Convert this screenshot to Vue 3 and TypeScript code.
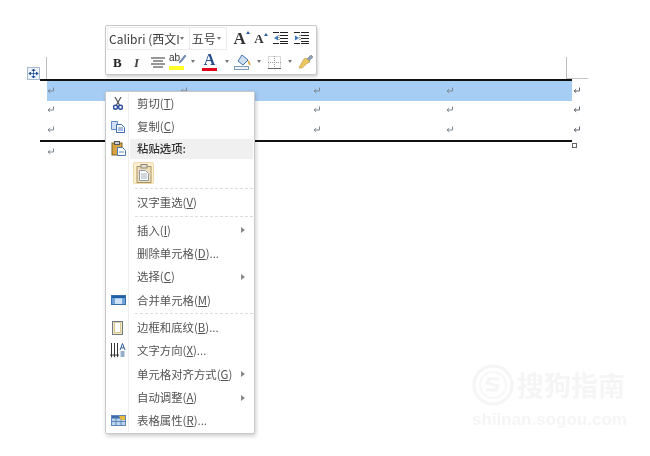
<script setup lang="ts">
interface MenuItem {
  before: string
  key: string
  after?: string
  icon?: string
  arrow?: boolean
  sep?: boolean
}

const rows = [0, 1, 2]
const cols = [0, 1, 2, 3]

const topItems: MenuItem[] = [
  { before: '剪切', key: 'T', icon: 'cut' },
  { before: '复制', key: 'C', icon: 'copy' },
]

const items: MenuItem[] = [
  { before: '汉字重选', key: 'V', sep: true },
  { before: '插入', key: 'I', arrow: true },
  { before: '删除单元格', key: 'D', after: '...' },
  { before: '选择', key: 'C', arrow: true },
  { before: '合并单元格', key: 'M', icon: 'merge', sep: true },
  { before: '边框和底纹', key: 'B', after: '...', icon: 'border' },
  { before: '文字方向', key: 'X', after: '...', icon: 'dir' },
  { before: '单元格对齐方式', key: 'G', arrow: true },
  { before: '自动调整', key: 'A', arrow: true },
  { before: '表格属性', key: 'R', after: '...', icon: 'props' },
]
</script>

<template>
  <div class="page">
    <div class="margin-marks">
      <div class="move-handle">
        <svg width="13" height="13" viewBox="0 0 13 13">
          <rect x="0.5" y="0.5" width="12" height="12" fill="#eef3fa" stroke="#a9b8cc" />
          <path d="M6.5 2v9M2 6.5h9M6.5 2L5 3.5h3zM6.5 11L5 9.5h3zM2 6.5L3.5 5v3zM11 6.5L9.5 5v3z" fill="#1f4f96" stroke="#1f4f96" stroke-width="0.8" />
        </svg>
      </div>
      <div class="crop crop-left"></div>
      <div class="crop crop-right"></div>
    </div>

    <div class="table">
      <div v-for="r in rows" :key="r" class="row">
        <div class="cells" :class="{ selected: r === 0 }">
          <div v-for="c in cols" :key="c" class="cell">
            <svg class="ret" width="8" height="8" viewBox="0 0 8 8">
              <path d="M6.5 0.5v3.5H1.5M3.2 2.2L1 4l2.2 1.8" fill="none" stroke="#7d8790" stroke-width="1" />
            </svg>
          </div>
        </div>
        <svg class="ret end" width="8" height="8" viewBox="0 0 8 8">
          <path d="M6.5 0.5v3.5H1.5M3.2 2.2L1 4l2.2 1.8" fill="none" stroke="#5f6770" stroke-width="1" />
        </svg>
      </div>
      <div class="end-square"></div>
    </div>

    <div class="after-table">
      <svg class="ret" width="8" height="8" viewBox="0 0 8 8">
        <path d="M6.5 0.5v3.5H1.5M3.2 2.2L1 4l2.2 1.8" fill="none" stroke="#7d8790" stroke-width="1" />
      </svg>
    </div>

    <div class="toolbar">
      <div class="tool-row">
        <div class="combo combo-font"><span class="combo-text">Calibri (西文I</span><i class="drop"></i></div>
        <div class="combo combo-size"><span class="combo-text">五号</span><i class="drop"></i></div>
        <span class="grow">A<i class="tri"></i></span>
        <span class="shrink">A<i class="tri"></i></span>
        <svg class="tool-icon indent" width="15" height="14" viewBox="0 0 15 14">
          <path d="M0 1.500h6M7 1.500h8M7 4.500h8M7 7.500h8M7 10.500h8M0 12.500h6M7 12.500h8" stroke="#222" />
          <path d="M6 4v6" stroke="#555" stroke-dasharray="1 1" />
          <path d="M5 4.500v5L1 7z" fill="#3f76c0" />
        </svg>
        <svg class="tool-icon indent" width="15" height="14" viewBox="0 0 15 14">
          <path d="M0 1.500h6M7 1.500h8M7 4.500h8M7 7.500h8M7 10.500h8M0 12.500h6M7 12.500h8" stroke="#222" />
          <path d="M6 4v6" stroke="#555" stroke-dasharray="1 1" />
          <path d="M1 4.500v5L5 7z" fill="#3f76c0" />
        </svg>
      </div>
      <div class="tool-row second">
        <b class="btn btn-b">B</b>
        <em class="btn btn-i">I</em>
        <svg class="btn btn-center" width="14" height="11" viewBox="0 0 14 11">
          <path d="M0 1h14M2 4h10M0 7h14M2 10h10" stroke="#333" stroke-width="1.200" />
        </svg>
        <div class="btn highlight">
          <span class="hl-text">ab</span>
          <svg class="hl-pen" width="8" height="10" viewBox="0 0 8 10">
            <path d="M7 1L2 7 1 9l2-1 5-6z" fill="#6d8fbd" stroke="#4a6a96" stroke-width="0.600" />
          </svg>
          <i class="hl-bar"></i>
        </div>
        <i class="btn drop d-hl"></i>
        <div class="btn font-color">
          <span class="fc-text">A</span>
          <i class="fc-bar"></i>
        </div>
        <i class="btn drop d-fc"></i>
        <svg class="btn fill-icon" width="17" height="17" viewBox="0 0 17 17">
          <path d="M4 8l4-6 6 5-5 5z" fill="#cfe0f3" stroke="#3f6ea8" />
          <path d="M14 8c1 1.500 2 3 1.500 4" stroke="#d9a53c" stroke-width="1.800" fill="none" />
          <rect x="0.500" y="13.500" width="14" height="3" fill="#f4f4f4" stroke="#7e9bb5" />
        </svg>
        <i class="btn drop d-fill"></i>
        <svg class="btn grid-icon" width="13" height="13" viewBox="0 0 13 13">
          <rect x="0.500" y="0.500" width="12" height="12" fill="none" stroke="#b5b5b5" stroke-dasharray="1 1" />
          <path d="M6.500 0v13M0 6.500h13" stroke="#999" stroke-dasharray="1 1" />
          <path d="M0 12.500h13" stroke="#666" />
        </svg>
        <i class="btn drop d-grid"></i>
        <svg class="btn brush" width="16" height="15" viewBox="0 0 16 15">
          <path d="M9 5l4-4 2 2-4 4z" fill="#8fa0b5" stroke="#6d7b8c" stroke-width="0.600" />
          <path d="M8 4l4 4-3 1.500L4 14H1l2-4 2.500-4.500z" fill="#ecc75f" stroke="#b8963f" stroke-width="0.600" />
        </svg>
      </div>
    </div>

    <div class="menu">
      <div v-for="item in topItems" :key="item.before" class="item">
        <div class="gutter">
          <svg v-if="item.icon === 'cut'" width="10" height="13" viewBox="0 0 10 13">
            <path d="M2 0l4.500 8M8 0L3.500 8" stroke="#555" stroke-width="1.200" />
            <circle cx="2.500" cy="10.300" r="2" fill="none" stroke="#2d4f9e" stroke-width="1.500" />
            <circle cx="7.500" cy="10.300" r="2" fill="none" stroke="#2d4f9e" stroke-width="1.500" />
          </svg>
          <svg v-else width="14" height="12" viewBox="0 0 14 12">
            <path d="M0.500 0.500h6v8h-6z" fill="#cfe0f4" stroke="#5f8ac4" />
            <path d="M5.500 3.500h5l3 3v5h-8z" fill="#fff" stroke="#3f6fb4" />
            <path d="M7 7h5M7 9h5" stroke="#4f7fbe" />
          </svg>
        </div>
        <span class="label">{{ item.before }}(<u>{{ item.key }}</u>)</span>
      </div>

      <div class="item heading">
        <div class="gutter">
          <svg width="15" height="15" viewBox="0 0 15 15">
            <rect x="1" y="2" width="10" height="12" fill="#d9a441" stroke="#7d6322" />
            <rect x="3.500" y="0.500" width="5" height="3" fill="#c9ccd1" stroke="#555" />
            <path d="M6.500 6.500h5l3 3v5h-8z" fill="#fff" stroke="#4c78b4" />
            <path d="M8 11h5" stroke="#5c86be" />
          </svg>
        </div>
        <span class="label">粘贴选项:</span>
      </div>

      <div class="paste-row">
        <div class="paste-btn">
          <svg width="16" height="19" viewBox="0 0 16 19">
            <rect x="1" y="2.500" width="14" height="16" fill="#f0dfbb" stroke="#a89468" />
            <rect x="5" y="0.500" width="6" height="3.500" fill="#e4e0d6" stroke="#8e8672" />
            <path d="M3.500 6.500h6l3 3v7h-9z" fill="#fff" stroke="#8d98a6" />
            <path d="M5 10h6M5 12h6M5 14h6" stroke="#a3adb8" />
          </svg>
        </div>
      </div>
      <div class="sep"></div>

      <template v-for="item in items" :key="item.before">
        <div class="item">
          <div class="gutter">
            <svg v-if="item.icon === 'merge'" width="15" height="10" viewBox="0 0 15 10">
              <rect x="0.500" y="0.500" width="14" height="9" fill="#6fa3d8" stroke="#3a6ea8" />
              <rect x="1" y="1" width="13" height="2" fill="#1f5fa8" />
              <rect x="4" y="3.500" width="7" height="5.500" fill="#cfe3f6" />
            </svg>
            <svg v-else-if="item.icon === 'border'" width="12" height="14" viewBox="0 0 12 14">
              <rect x="0.500" y="0.500" width="10" height="13" fill="#f3e6bd" stroke="#6f7a86" />
              <rect x="2.500" y="1.500" width="6" height="10" fill="#fff" stroke="#d8c893" />
            </svg>
            <svg v-else-if="item.icon === 'dir'" width="16" height="15" viewBox="0 0 16 15">
              <path d="M1.500 0v14M4.500 0v14M7.500 0v14" stroke="#333" />
              <path d="M0 11.500l1.500 3 1.500-3zM3 11.500l1.500 3 1.500-3zM6 11.500l1.500 3 1.500-3z" fill="#333" />
              <path d="M10 7l2.500-6.500L15 7M11 4.800h3M10.500 9h4M10.500 11h4M10.500 13h4" stroke="#2f5f9e" fill="none" />
            </svg>
            <svg v-else-if="item.icon === 'props'" width="15" height="11" viewBox="0 0 15 11">
              <rect x="0.500" y="0.500" width="14" height="10" fill="#bcd4ee" stroke="#5d88b8" />
              <rect x="1" y="1" width="13" height="2.500" fill="#3a6ea8" />
              <path d="M5 3v7M10 3v7M1 6.500h13" stroke="#5d88b8" />
              <path d="M8 1h6v4H10z" fill="#e8b93f" />
            </svg>
          </div>
          <span class="label">{{ item.before }}(<u>{{ item.key }}</u>){{ item.after }}</span>
          <i v-if="item.arrow" class="arrow"></i>
        </div>
        <div v-if="item.sep" class="sep"></div>
      </template>
    </div>

    <div class="watermark">
      <div class="wm-top">
        <svg width="42" height="42" viewBox="0 0 42 42">
          <circle cx="21" cy="21" r="19" fill="none" stroke="#f5f5f5" stroke-width="3" />
          <circle cx="21" cy="21" r="13" fill="none" stroke="#f7f7f7" stroke-width="2" />
          <path d="M27 15H17l-2 4 11 3-2 4H14" fill="none" stroke="#f5f5f5" stroke-width="3" />
        </svg>
        <span class="wm-cn">搜狗指南</span>
      </div>
      <div class="wm-url">shiinan.sogou.com</div>
    </div>
  </div>
</template>

<style scoped>
.page {
  position: relative;
  width: 650px;
  height: 456px;
  overflow: hidden;
  background: #fff;
  font-family: "Noto Sans CJK SC", "Liberation Sans", sans-serif;
  color: #525252;
  filter: blur(0.35px);
}

.margin-marks {
  display: flex;
  height: 79px;
  padding-top: 57px;
  box-sizing: border-box;
  align-items: flex-end;
}

.move-handle {
  width: 13px;
  height: 13px;
  margin-left: 27px;
  margin-bottom: -1px;
}

.move-handle svg {
  display: block;
}

.crop {
  height: 22px;
  border-right: 1px solid #bdbdbd;
}

.crop-left {
  width: 6px;
}

.crop-right {
  position: relative;
  width: 519px;
}

.crop-right::after {
  content: "";
  position: absolute;
  left: 100%;
  bottom: 0;
  width: 22px;
  height: 1px;
  background: #c4c4c4;
}

.table {
  position: relative;
  width: 532px;
  margin-left: 40px;
  border-top: 2px solid #111;
  border-bottom: 2px solid #111;
}

.row {
  display: flex;
  width: 545px;
  height: 19.500px;
  margin-left: 7px;
  align-items: center;
}

.cells {
  display: grid;
  grid-template-columns: 133px 133px 133px 126px;
  width: 525px;
  height: 100%;
  align-items: center;
}

.cells.selected {
  background: #a6cdf4;
}

.cell {
  display: flex;
}

.ret {
  display: block;
}

.end {
  margin-left: 1px;
}

.end-square {
  position: absolute;
  right: -5px;
  bottom: -8px;
  width: 5px;
  height: 5px;
  box-sizing: border-box;
  border: 1px solid #666;
  background: #fff;
}

.after-table {
  margin: 6px 0 0 47px;
}

.toolbar {
  position: absolute;
  left: 105px;
  top: 25px;
  width: 212px;
  height: 50px;
  box-sizing: border-box;
  padding: 0 1px;
  background: #fff;
  border: 1px solid #c8c8c8;
  border-radius: 2px;
  box-shadow: 1px 2px 3px rgba(0, 0, 0, 0.18);
}

.tool-row {
  display: flex;
  align-items: center;
  height: 24px;
}

.tool-row.second {
  position: relative;
}

.combo {
  display: flex;
  align-items: center;
  height: 23px;
  box-sizing: border-box;
  border: 1px solid #ececec;
  font-size: 12px;
  color: #3c3c3c;
}

.combo-font {
  width: 86px;
  padding-left: 1px;
}

.combo-size {
  width: 39px;
  padding-left: 2px;
  border-left: none;
}

.combo-text {
  flex: 1;
  white-space: nowrap;
  overflow: hidden;
}

.drop {
  display: block;
  width: 0;
  height: 0;
  margin-right: 5px;
  border-left: 2.500px solid transparent;
  border-right: 2.500px solid transparent;
  border-top: 3px solid #777;
}

.grow,
.shrink {
  position: relative;
  font-family: "Liberation Serif", serif;
  font-weight: 700;
  color: #333;
  line-height: 1;
}

.grow {
  margin-left: 7px;
  width: 22px;
  font-size: 17px;
}

.shrink {
  width: 20px;
  font-size: 13px;
}

.tri {
  position: absolute;
  top: 1px;
  width: 0;
  height: 0;
  border-left: 2px solid transparent;
  border-right: 2px solid transparent;
  border-bottom: 3px solid #2a5fa8;
}

.indent {
  margin-right: 6px;
  flex: none;
}

/* second toolbar row is a tight strip of icons at fixed offsets */
.btn {
  position: absolute;
}

.btn-b {
  left: 6px;
  top: 5px;
  font: 700 13px "Liberation Serif", serif;
  color: #222;
}

.btn-i {
  left: 27px;
  top: 5px;
  font: italic 700 13px "Liberation Serif", serif;
  color: #444;
}

.btn-center {
  left: 44px;
  top: 7px;
}

.highlight {
  left: 62px;
  top: 2px;
  width: 17px;
  height: 19px;
}

.hl-text {
  display: block;
  font: 10px/12px "Liberation Sans", sans-serif;
  color: #333;
}

.hl-pen {
  position: absolute;
  left: 9px;
  top: 2px;
}

.hl-bar {
  display: block;
  width: 15px;
  height: 4px;
  margin-top: 2px;
  background: #ffff2a;
}

.d-hl {
  left: 84px;
  top: 10px;
}

.font-color {
  left: 95px;
  top: 2px;
  width: 15px;
  text-align: center;
}

.fc-text {
  display: block;
  font: 700 16px/16px "Liberation Serif", serif;
  color: #27508f;
}

.fc-bar {
  display: block;
  width: 15px;
  height: 3px;
  background: #e3001b;
}

.d-fc {
  left: 118px;
  top: 10px;
}

.fill-icon {
  left: 127px;
  top: 3px;
}

.d-fill {
  left: 150px;
  top: 10px;
}

.grid-icon {
  left: 161px;
  top: 6px;
}

.d-grid {
  left: 181px;
  top: 10px;
}

.brush {
  left: 191px;
  top: 4px;
}

.menu {
  position: absolute;
  left: 105px;
  top: 91px;
  width: 150px;
  height: 343px;
  box-sizing: border-box;
  padding: 0 1px;
  background: #fff;
  border: 1px solid #c9c9c9;
  border-radius: 2px;
  box-shadow: 1px 2px 4px rgba(0, 0, 0, 0.2);
}

.menu::before {
  content: "";
  position: absolute;
  left: 22px;
  top: 1px;
  bottom: 1px;
  width: 1px;
  background: #eeeeee;
}

.item {
  display: flex;
  align-items: center;
  height: 23.300px;
  font-size: 11.400px;
}

.gutter {
  display: flex;
  flex: none;
  width: 22px;
  align-items: center;
  justify-content: center;
}

.gutter svg {
  display: block;
}

.label {
  margin-left: 8px;
  white-space: nowrap;
  line-height: 1;
}

.heading {
  height: 20.400px;
  font-weight: 500;
  color: #333;
  background: linear-gradient(to right, #fff 23px, #f0f0f0 23px);
}

.paste-row {
  display: flex;
  height: 28.500px;
  padding-left: 26px;
  align-items: center;
}

.paste-btn {
  display: flex;
  width: 21px;
  height: 22px;
  box-sizing: border-box;
  align-items: center;
  justify-content: center;
  background: #fdf0d0;
  border: 1px solid #eed9a8;
  border-radius: 2px;
}

.sep {
  margin: 1px 0 2px 28px;
  border-top: 1px dashed #dcdcdc;
}

.arrow {
  position: absolute;
  left: 135px;
  width: 0;
  height: 0;
  border-top: 3px solid transparent;
  border-bottom: 3px solid transparent;
  border-left: 4px solid #8a8a8a;
}

.watermark {
  position: absolute;
  left: 472px;
  top: 364px;
  width: 160px;
  color: #f5f5f5;
  pointer-events: none;
}

.wm-top {
  display: flex;
  align-items: center;
  gap: 3px;
}

.wm-cn {
  font-size: 27px;
  line-height: 36px;
  font-weight: 700;
}

.wm-url {
  margin-top: 4px;
  font: 700 17px/20px "Liberation Sans", sans-serif;
  white-space: nowrap;
}
</style>
